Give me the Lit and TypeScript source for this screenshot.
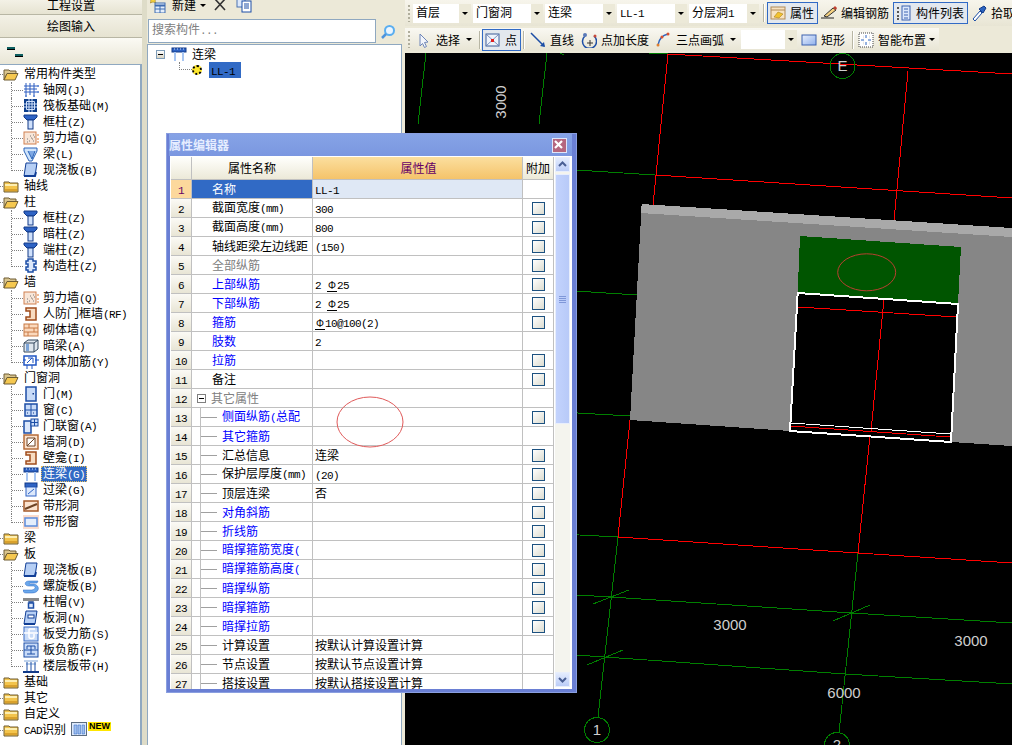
import { LitElement, html, css, svg } from "lit";
import { customElement } from "lit/decorators.js";

const shared = css`
  :host {
    font-family: "Noto Sans CJK SC", sans-serif;
    font-size: 12px;
    line-height: 16px;
    color: #000;
  }
  .la {
    font-family: "Liberation Mono", monospace;
    font-size: 11px;
    letter-spacing: -0.6px;
  }
  svg {
    display: block;
    flex: none;
  }
`;

// latin runs are half width in the reference, so they get their own size
const txt = (s: string) =>
  s
    .split(/([\x00-\x7f]+)/)
    .filter(Boolean)
    .map((p) =>
      /^[\x00-\x7f]/.test(p) ? html`<span class="la">${p}</span>` : p
    );

const icons: Record<string, any> = {
  folderOpen: svg`<path d="M1 4h5l1 1h6v3H4l-3 6z" fill="#d8c48e" stroke="#6e5d34"/><path d="M4 7.500h11l-3 6.500H1z" fill="#f5c850" stroke="#6e5d34"/>`,
  folder: svg`<path d="M1 4h5l1 1h8v9H1z" fill="#f3c44c" stroke="#6e5d34"/><path d="M2 6h12v2H2z" fill="#fdeeb0"/><path d="M2 11h12v2H2z" fill="#d9a12c"/>`,
  grid: svg`<path d="M1 4h13M1 7h13M1 10h13M3 1v12M7 1v12M11 1v12" stroke="#2c5cc0" fill="none"/><path d="M14 3h2v2h-2zM14 9h2v2h-2zM2 13h2v2H2zM10 13h2v2h-2z" fill="#6f93d8"/>`,
  raft: svg`<rect x="1" y="1" width="13" height="13" fill="#0e3f8c"/><path d="M3.500 3.500h8v8h-8zM1 6h13M1 9h13M6 1v13M9 1v13" stroke="#cfe0fb" fill="none"/>`,
  col: svg`<path d="M1 1h13v2l-3 3H4L1 3z" fill="#2e63c4" stroke="#123a88"/><rect x="5" y="6" width="5" height="9" fill="#cfe0fb" stroke="#123a88"/>`,
  wall: svg`<rect x="1" y="2" width="12" height="12" fill="#f8e6d8" stroke="#d08050"/><path d="M4 9h1M7 6h1M9 9h1M6 11h1M10 11h1M4 12h1M8 8h1M10 5h1M11 7h1" stroke="#777"/><path d="M14 5h2M14 9h2M14 12h2" stroke="#e07a30"/>`,
  beam: svg`<path d="M1 2h13v3L9 15H6L1 5z" fill="#cfe4fb" stroke="#2c64b8"/><path d="M5 5l4 8 3-8" fill="#7ea8e4" stroke="#2c64b8"/>`,
  slab: svg`<path d="M3 1h11l-2 13H1z" fill="#b6cff5" stroke="#123f96"/><path d="M1 14h11l1-4" fill="none" stroke="#123f96" stroke-width="2"/>`,
  gz: svg`<path d="M5 1h5v2h3v3h-2v3h2v3h-3v2H5v-2H3V9h2V6H3V3h2z" fill="#dce8fb" stroke="#1c4ea6" stroke-width="1.500"/>`,
  rf: svg`<path d="M3 2h10v12H3v-3h4V5H3z" fill="#f8dcc2" stroke="#a04c1c" stroke-width="1.500"/>`,
  brick: svg`<rect x="1" y="2" width="14" height="12" fill="#fbd9bd" stroke="#c87a46"/><path d="M1 6h14M1 10h14M6 2v4M11 6v4M5 10v4" stroke="#c87a46"/>`,
  anbeam: svg`<path d="M1 5l4-3h10v9l-4 3H1z" fill="#dfe6ee" stroke="#34495e"/><path d="M1 5h10v9M11 5l4-3" fill="none" stroke="#34495e"/><path d="M3 6h3v7H3z" fill="#7ca4d8"/>`,
  rebar: svg`<rect x="1" y="2" width="12" height="9" fill="#fff" stroke="#1f55c4" stroke-width="1.500"/><path d="M4 9l5-5M5 4h5v5M0 6h3M12 6h4M4 11v4M9 11v4" stroke="#1f55c4" fill="none"/>`,
  door: svg`<rect x="3" y="1" width="10" height="14" fill="#c8dbf8" stroke="#1c4ea6" stroke-width="1.500"/><rect x="9.500" y="7" width="1.500" height="1.500" fill="#123a88"/>`,
  win: svg`<rect x="2" y="2" width="12" height="12" fill="#c8dbf8" stroke="#1c4ea6" stroke-width="1.500"/><path d="M8 2v12M2 8h12" stroke="#1c4ea6"/><path d="M4 11h1M10 11h1" stroke="#123a88"/>`,
  doorwin: svg`<rect x="1" y="3" width="7" height="12" fill="#dce8fb" stroke="#1c4ea6" stroke-width="1.500"/><rect x="8" y="1" width="7" height="7" fill="#c8dbf8" stroke="#1c4ea6"/><path d="M11.500 1v7M8 4.500h7" stroke="#1c4ea6"/>`,
  hole: svg`<rect x="1" y="1" width="14" height="14" fill="#fbe3cf" stroke="#b66c3a" stroke-width="1.500"/><path d="M4 4h8v8H4z" fill="#fff" stroke="#6e4526"/><path d="M4 12l8-8" stroke="#6e4526"/>`,
  lian: svg`<rect x="1" y="2" width="14" height="4" fill="#2e63c4" stroke="#123a88"/><path d="M3 3h1M6 3h1M9 3h1M12 3h1" stroke="#cfe0fb"/><path d="M3 6h2v9H3zM11 6h2v9h-2z" fill="#a8c6f2"/>`,
  guo: svg`<rect x="2" y="1" width="12" height="4" fill="#2e63c4" stroke="#123a88"/><rect x="3" y="5" width="10" height="9" fill="#dce8fb" stroke="#2e63c4"/><path d="M5 12l6-5" stroke="#2e63c4"/>`,
  strip: svg`<rect x="1" y="3" width="14" height="10" fill="#fbe3cf" stroke="#a45a2a" stroke-width="1.500"/><path d="M2 11l12-5" stroke="#6e4526" stroke-width="2"/>`,
  stripw: svg`<rect x="0" y="1" width="16" height="14" fill="#fbdccc"/><rect x="2" y="4" width="12" height="8" fill="#e4eefc" stroke="#5c8cdc" stroke-width="1.500"/>`,
  spiral: svg`<path d="M15 3H6C1 3 1 8 6 8h4c3 0 3 3-1 4H0c0 2 1 3 3 3h6c7 0 9-7 2-9H7c-1 0-1-1 0-1h7z" fill="#6aa8ec" stroke="#2c64c0" stroke-width=".5"/>`,
  cap: svg`<rect x="0" y="4" width="16" height="3" fill="#8a8a8a"/><path d="M5 7h6l-1 2H6z" fill="#4f6fa8"/><rect x="5.500" y="9" width="5" height="5" fill="#dce8fb" stroke="#1c4ea6" stroke-width="1.500"/>`,
  slabhole: svg`<path d="M3 1h11l-2 13H1z" fill="#b6cff5" stroke="#123f96"/><rect x="5" y="5" width="6" height="3" fill="#fff" stroke="#123f96"/><path d="M1 14h11" stroke="#123f96" stroke-width="2"/>`,
  slabbar: svg`<rect x="1" y="1" width="14" height="14" fill="#c8dbf8" stroke="#3a6cc4"/><path d="M1 7h14M6 3h6M6 3v8c0 2 5 2 5 0V8" fill="none" stroke="#fff" stroke-width="1.500"/>`,
  slabneg: svg`<rect x="1" y="1" width="14" height="14" fill="#c8dbf8" stroke="#1c4ea6"/><path d="M4 4h8v3M4 4v3M1 8h14M4 12h8M8 4v8" fill="none" stroke="#1c4ea6"/>`,
  band: svg`<path d="M1 3h14M3 6h10" stroke="#7ca4d8"/><path d="M4 4v9M8 4v9M12 4v9" stroke="#1c4ea6"/><path d="M0 14h16" stroke="#123a88" stroke-width="2"/>`,
  cad: svg`<rect x=".500" y=".500" width="15" height="13" fill="#dde9fb" stroke="#5d6d80"/><path d="M3 3h3v9H3zM7 3h2.500v9H7zM11 3h2.500v9H11z" fill="#9ebfee" stroke="#2c64c0" stroke-width=".5"/>`,
  // toolbar glyphs
  add: svg`<path d="M3 0l1 2 2 0-1 2 1 2-3-1-3 1 1-2-1-2h2z" fill="#f6d23c" stroke="#8a6b10" stroke-width=".5"/><rect x="5" y="6" width="10" height="10" fill="#e4eefb" stroke="#3f6cb0"/><path d="M5 8.500h10" stroke="#3f6cb0" stroke-width="2"/><path d="M5 12h10M10 9v7" stroke="#3f6cb0"/>`,
  del: svg`<path d="M3 2l10 11M13 2L3 13" stroke="#333" stroke-width="1.600"/>`,
  copy: svg`<rect x="1" y="0" width="8" height="10" fill="#dce8fb" stroke="#4a72b0"/><rect x="6" y="4" width="9" height="11" fill="#fff" stroke="#1c4ea6"/><path d="M8 7h5M8 9h5M8 11h5" stroke="#1c4ea6"/>`,
  search: svg`<circle cx="9.500" cy="6.500" r="4.500" fill="#eaf5ff" stroke="#5aaef0" stroke-width="2"/><path d="M6 10l-4 4" stroke="#4d94dc" stroke-width="2.500"/>`,
  select: svg`<path d="M4 2l8 8-3.500.5 2 4-2 1-2-4L4 14z" fill="#f2f5fb" stroke="#6e86b8"/>`,
  point: svg`<rect x="1" y="2" width="13" height="12" fill="#eef3fb" stroke="#3c5c98"/><path d="M2 3l11 10M13 3L2 13" stroke="#7c93c0"/><rect x="6" y="7" width="3" height="3" fill="#e02020"/>`,
  line: svg`<path d="M1 1l13 13" stroke="#1c4ea6" stroke-width="1.500"/><path d="M15 15l-5-1 4-4z" fill="#1c4ea6"/>`,
  padd: svg`<path d="M4 4a7 7 0 1 0 9 0" fill="none" stroke="#1c4ea6" stroke-width="1.500"/><path d="M9 8v6M6 11h6" stroke="#333"/><circle cx="4" cy="3" r="2" fill="#5a7ab8"/><circle cx="14" cy="4" r="1.500" fill="#c84a3a"/>`,
  arc: svg`<path d="M2 13C3 7 7 3 12 2" fill="none" stroke="#2c64c0" stroke-width="1.500"/><circle cx="2" cy="13" r="1.500" fill="#e08030"/><circle cx="6" cy="5" r="1.500" fill="#d85030"/><circle cx="12" cy="2" r="1.500" fill="#d85030"/>`,
  rect: svg`<defs><linearGradient id="rg" x2="1" y2="1"><stop stop-color="#e8effc"/><stop offset="1" stop-color="#8fb0ec"/></linearGradient></defs><rect x="1" y="3" width="14" height="10" fill="url(#rg)" stroke="#3c62b0"/>`,
  smart: svg`<rect x="1" y="1" width="14" height="14" fill="#fff" stroke="#444" stroke-dasharray="1 1"/><path d="M5 5h.1M11 5h.1M5 11h.1M11 11h.1" stroke="#000" stroke-width="3"/><path d="M8 3v3M8 10v3M3 8h3M10 8h3" stroke="#2c64c0"/>`,
  attr: svg`<rect x="1" y="2" width="14" height="12" fill="#f7e2c0" stroke="#b08a58"/><path d="M1 5h14" stroke="#b08a58"/><path d="M4 12l4-5 5 2-4 4z" fill="#f2c230" stroke="#9a7410" stroke-width=".5"/>`,
  edit: svg`<path d="M0 13h13" stroke="#222"/><path d="M3 11l9-8 3 2-9 7z" fill="#f4d080" stroke="#333"/><path d="M12 3l3 2 1-2-2-2z" fill="#c04030"/>`,
  list: svg`<path d="M1 3h2M1 7h2M1 11h2M1 14h2" stroke="#555" stroke-width="2"/><rect x="6" y="1" width="8" height="14" fill="#dce8fb" stroke="#3c62b0"/><path d="M8 4h4M8 7h4M8 10h4M8 13h4" stroke="#3c62b0"/>`,
  pick: svg`<path d="M2 14l7-8 2 2-7 8z" fill="#fff" stroke="#1c4ea6"/><path d="M8 4l5-3 2 2-3 5z" fill="#2c64c0" stroke="#123a88"/>`,
};

const icon = (name: string, size = 16) =>
  html`<svg width=${size} height=${size} viewBox="0 0 16 16">${icons[name]}</svg>`;

type Leaf = { label: string; icon: string; selected?: boolean };
type Group = { label: string; open?: boolean; items?: Leaf[] };

const groups: Group[] = [
  {
    label: "常用构件类型",
    open: true,
    items: [
      { label: "轴网(J)", icon: "grid" },
      { label: "筏板基础(M)", icon: "raft" },
      { label: "框柱(Z)", icon: "col" },
      { label: "剪力墙(Q)", icon: "wall" },
      { label: "梁(L)", icon: "beam" },
      { label: "现浇板(B)", icon: "slab" },
    ],
  },
  { label: "轴线" },
  {
    label: "柱",
    open: true,
    items: [
      { label: "框柱(Z)", icon: "col" },
      { label: "暗柱(Z)", icon: "col" },
      { label: "端柱(Z)", icon: "col" },
      { label: "构造柱(Z)", icon: "gz" },
    ],
  },
  {
    label: "墙",
    open: true,
    items: [
      { label: "剪力墙(Q)", icon: "wall" },
      { label: "人防门框墙(RF)", icon: "rf" },
      { label: "砌体墙(Q)", icon: "brick" },
      { label: "暗梁(A)", icon: "anbeam" },
      { label: "砌体加筋(Y)", icon: "rebar" },
    ],
  },
  {
    label: "门窗洞",
    open: true,
    items: [
      { label: "门(M)", icon: "door" },
      { label: "窗(C)", icon: "win" },
      { label: "门联窗(A)", icon: "doorwin" },
      { label: "墙洞(D)", icon: "hole" },
      { label: "壁龛(I)", icon: "rf" },
      { label: "连梁(G)", icon: "lian", selected: true },
      { label: "过梁(G)", icon: "guo" },
      { label: "带形洞", icon: "strip" },
      { label: "带形窗", icon: "stripw" },
    ],
  },
  { label: "梁" },
  {
    label: "板",
    open: true,
    items: [
      { label: "现浇板(B)", icon: "slab" },
      { label: "螺旋板(B)", icon: "spiral" },
      { label: "柱帽(V)", icon: "cap" },
      { label: "板洞(N)", icon: "slabhole" },
      { label: "板受力筋(S)", icon: "slabbar" },
      { label: "板负筋(F)", icon: "slabneg" },
      { label: "楼层板带(H)", icon: "band" },
    ],
  },
  { label: "基础" },
  { label: "其它" },
  { label: "自定义" },
];

@customElement("left-nav")
class LeftNav extends LitElement {
  static styles = [
    shared,
    css`
      :host {
        display: flex;
        flex-direction: column;
        width: 142px;
        height: 745px;
        flex: none;
        overflow: hidden;
      }
      .tab {
        flex: none;
        display: flex;
        align-items: center;
        justify-content: center;
        background: linear-gradient(#f3f1e6, #e6e3d1);
        border-bottom: 1px solid #b8b6a4;
        box-sizing: border-box;
      }
      .tab.first {
        height: 15px;
        padding-bottom: 4px;
      }
      .tab.second {
        height: 23px;
      }
      .head {
        flex: none;
        height: 26px;
        box-sizing: border-box;
        padding: 9px 0 0 7px;
        background: linear-gradient(#fbfaf4, #e9e6d6);
      }
      .dash {
        display: block;
        width: 8px;
        height: 2px;
        background: #0d5f60;
        border-bottom: 1px solid #000;
      }
      .dash + .dash {
        margin: 4px 0 0 8px;
      }
      .tree {
        flex: 1;
        background: #fff;
        border-top: 1px solid #8fa8c0;
        border-right: 2px solid #8fa8c0;
        padding-top: 1px;
      }
      .row {
        display: flex;
        align-items: center;
        height: 16px;
        white-space: nowrap;
      }
      .lead {
        width: 3px;
        border-top: 1px dotted #808080;
      }
      .row.group .text {
        margin-left: 3px;
      }
      .row.leaf {
        padding-left: 11px;
      }
      .conn {
        width: 12px;
        height: 16px;
        box-sizing: border-box;
        border-left: 1px dotted #808080;
        position: relative;
      }
      .conn::after {
        content: "";
        position: absolute;
        left: 0;
        right: 0;
        top: 8px;
        border-top: 1px dotted #808080;
      }
      .conn.last {
        height: 9px;
        align-self: flex-start;
      }
      .text {
        margin-left: 2px;
        padding: 0 2px;
        height: 16px;
        line-height: 14px;
        box-sizing: border-box;
      }
      .text.sel {
        background: #316ac5;
        color: #fff;
        outline: 1px dotted #e8c060;
        outline-offset: -1px;
      }
      .new {
        margin: -7px 0 0 1px;
        background: #ffe600;
        font: bold 9px/9px "Liberation Sans", sans-serif;
        color: #000;
        padding: 0 1px;
      }
      .cad {
        margin-left: 3px;
      }
    `,
  ];

  render() {
    return html`
      <div class="tab first">工程设置</div>
      <div class="tab second">绘图输入</div>
      <div class="head"><i class="dash"></i><i class="dash"></i></div>
      <div class="tree">
        ${groups.map(
          (g) => html`
            <div class="row group">
              <span class="lead"></span>
              ${icon(g.open ? "folderOpen" : "folder")}
              <span class="text">${txt(g.label)}</span>
            </div>
            ${(g.items ?? []).map(
              (it, i) => html`
                <div class="row leaf">
                  <span class="conn ${i === g.items!.length - 1 ? "last" : ""}"></span>
                  ${icon(it.icon)}
                  <span class="text ${it.selected ? "sel" : ""}">${txt(it.label)}</span>
                </div>
              `
            )}
          `
        )}
        <div class="row group">
          <span class="lead"></span>
          ${icon("folder")}
          <span class="text">${txt("CAD识别")}</span>
          <span class="cad">${icon("cad")}</span>
          <span class="new">NEW</span>
        </div>
      </div>
    `;
  }
}

@customElement("component-panel")
class ComponentPanel extends LitElement {
  static styles = [
    shared,
    css`
      :host {
        display: flex;
        flex-direction: column;
        width: 258px;
        height: 745px;
        flex: none;
        box-sizing: border-box;
        padding-right: 3px;
        background: #ece9d8;
      }
      .bar {
        height: 19px;
        box-sizing: border-box;
        padding: 0 0 9px 3px;
        display: flex;
        align-items: center;
        flex: none;
      }
      .bar .name {
        margin-left: 6px;
      }
      .caret {
        width: 0;
        height: 0;
        margin: 1px 0 0 4px;
        border: 3px solid transparent;
        border-top: 3px solid #000;
        border-bottom: 0;
      }
      .del {
        margin-left: 6px;
      }
      .copy {
        margin-left: 8px;
      }
      .search {
        flex: none;
        height: 25px;
        display: flex;
        padding-left: 1px;
      }
      .input {
        width: 228px;
        height: 24px;
        box-sizing: border-box;
        background: #fff;
        border: 1px solid #8fa8c0;
        padding: 1px 0 0 3px;
        color: #808080;
      }
      .go {
        margin: 5px 0 0 4px;
      }
      .tree {
        flex: 1;
        background: #fff;
        border: 1px solid #8fa8c0;
        border-bottom: 0;
        padding: 1px 0 0 8px;
      }
      .row {
        display: flex;
        align-items: center;
        height: 16px;
      }
      .box {
        width: 9px;
        height: 9px;
        box-sizing: border-box;
        border: 1px solid #7f9db9;
        background: linear-gradient(#fff, #d8d4c4);
        display: flex;
        align-items: center;
        justify-content: center;
        margin-right: 6px;
      }
      .box::after {
        content: "";
        width: 5px;
        height: 1px;
        background: #000;
      }
      .row .label {
        margin-left: 5px;
      }
      .conn {
        width: 13px;
        height: 8px;
        margin: -8px 0 0 23px;
        box-sizing: border-box;
        border-left: 1px dotted #808080;
        border-bottom: 1px dotted #808080;
      }
      .gear {
        width: 10px;
        height: 10px;
        box-sizing: border-box;
        background: #ffe830;
        border: 2px dotted #000;
        border-radius: 50%;
      }
      .picked {
        margin-left: 7px;
        width: 32px;
        height: 16px;
        background: #316ac5;
        padding-left: 2px;
        box-sizing: border-box;
      }
    `,
  ];

  render() {
    return html`
      <div class="bar">
        ${icon("add")}
        <span class="name">新建</span>
        <i class="caret"></i>
        <span class="del">${icon("del")}</span>
        <span class="copy">${icon("copy")}</span>
      </div>
      <div class="search">
        <div class="input">搜索构件${txt("...")}</div>
        <span class="go">${icon("search")}</span>
      </div>
      <div class="tree">
        <div class="row">
          <i class="box"></i>
          ${icon("lian")}
          <span class="label">连梁</span>
        </div>
        <div class="row">
          <i class="conn"></i>
          <i class="gear"></i>
          <span class="picked">${txt("LL-1")}</span>
        </div>
      </div>
    `;
  }
}

type Combo = { label: string; w: number };
type Tool = { icon: string; label: string; w: number; on?: boolean; caret?: "" | "tight" | "wide" };

const combos: Combo[] = [
  { label: "首层", w: 58 },
  { label: "门窗洞", w: 70 },
  { label: "连梁", w: 70 },
  { label: "LL-1", w: 70 },
  { label: "分层洞1", w: 70 },
];

const topTools: Tool[] = [
  { icon: "attr", label: "属性", w: 51, on: true },
  { icon: "edit", label: "编辑钢筋", w: 75 },
  { icon: "list", label: "构件列表", w: 75, on: true },
  { icon: "pick", label: "拾取", w: 50 },
];

@customElement("draw-toolbar")
class DrawToolbar extends LitElement {
  static styles = [
    shared,
    css`
      :host {
        display: block;
        height: 53px;
        flex: none;
        background: #ece9d8;
        overflow: hidden;
      }
      .row {
        display: flex;
        align-items: center;
        white-space: nowrap;
      }
      .one {
        height: 26px;
        padding-left: 3px;
        background: linear-gradient(#f7f5ec, #e8e5d4);
      }
      .two {
        height: 23px;
        width: 534px;
        box-sizing: border-box;
        margin-top: 2px;
        padding-left: 3px;
        background: linear-gradient(#f9f8f2, #e8e5d4);
      }
      .grip {
        width: 2px;
        height: 17px;
        margin-right: 3px;
        flex: none;
        background: repeating-linear-gradient(#b0ae9c 0 2px, transparent 2px 4px);
      }
      .combo {
        display: flex;
        height: 19px;
        margin-right: 2px;
        flex: none;
      }
      .combo .val {
        flex: 1;
        background: #fff;
        padding: 0 0 0 3px;
        overflow: hidden;
      }
      .drop {
        width: 12px;
        background: #ece9d8;
        display: flex;
        align-items: center;
        justify-content: center;
      }
      .drop::after,
      .caret {
        content: "";
        width: 0;
        height: 0;
        border: 3px solid transparent;
        border-top: 3px solid #000;
        border-bottom: 0;
      }
      .sep {
        width: 1px;
        height: 18px;
        flex: none;
        background: #b8b6a4;
        border-right: 1px solid #fff;
      }
      .tool {
        display: flex;
        align-items: center;
        gap: 4px;
        height: 22px;
        box-sizing: border-box;
        padding-left: 2px;
        flex: none;
        border: 1px solid transparent;
      }
      .tool.on {
        background: #e3e8ee;
        border: 1px solid #316ac5;
      }
      .caret.wide {
        margin-left: 2px;
      }
      .caret.tight {
        margin-left: -1px;
      }
      .sa {
        margin: 0 2px 0 2px;
      }
      .sb {
        margin: 0 1px 0 1px;
      }
      .sc {
        margin: 0 2px 0 2px;
      }
      .sd {
        margin: 0 1px 0 0;
      }
      .combo.small {
        margin: 0 1px 0 0;
      }
    `,
  ];

  tool(t: Tool) {
    return html`<div class="tool ${t.on ? "on" : ""}" style="width:${t.w}px">
      ${icon(t.icon)}
      <span>${t.label}</span>
      ${t.caret ? html`<i class="caret ${t.caret}"></i>` : ""}
    </div>`;
  }

  render() {
    return html`
      <div class="row one">
        <i class="grip"></i>
        ${combos.map(
          (c) => html`<div class="combo" style="width:${c.w}px">
            <div class="val">${txt(c.label)}</div>
            <i class="drop"></i>
          </div>`
        )}
        <i class="sep sa"></i>
        ${topTools.map((t) => this.tool(t))}
      </div>
      <div class="row two">
        <i class="grip"></i>
        ${this.tool({ icon: "select", label: "选择", w: 65, caret: "wide" })}
        <i class="sep sb"></i>
        ${this.tool({ icon: "point", label: "点", w: 39, on: true })}
        <i class="sep sc"></i>
        ${this.tool({ icon: "line", label: "直线", w: 51 })}
        ${this.tool({ icon: "padd", label: "点加长度", w: 75 })}
        ${this.tool({ icon: "arc", label: "三点画弧", w: 88, caret: "wide" })}
        <div class="combo small" style="width:56px">
          <div class="val"></div>
          <i class="drop"></i>
        </div>
        ${this.tool({ icon: "rect", label: "矩形", w: 54 })}
        <i class="sep sd"></i>
        ${this.tool({ icon: "smart", label: "智能布置", w: 84, caret: "tight" })}
      </div>
    `;
  }
}

const green = "#007f00";
const red = "#ff0000";

const lines: [string, string][] = [
  // green axes
  [green, "426,53 418,124"],
  [green, "547,53 539,124"],
  [green, "560,53 564,55"],
  [green, "649,53 668,54"],
  [green, "560,169 655,175"],
  [green, "560,290 637,295"],
  [green, "560,412 630,416"],
  [green, "560,534 618,537"],
  [green, "618,537 598,717"],
  [green, "858,553 839,733"],
  [green, "560,594 611,597 852,613 1012,623"],
  [green, "560,654 605,657 845,674 1012,684"],
  [green, "593,604 629,590"],
  [green, "833,621 870,605"],
  [green, "587,665 623,650"],
  // red axes outside the wall
  [red, "668,54 1012,74"],
  [red, "655,175 1012,198"],
  [red, "618,537 858,553 1012,563"],
  [red, "668,54 653,205"],
  [red, "630,420 618,537"],
  [red, "908,71 894,221"],
  [red, "884,299 858,553"],
];

@customElement("cad-canvas")
class CadCanvas extends LitElement {
  static styles = [
    shared,
    css`
      :host {
        display: block;
        flex: 1;
        background: #000;
        overflow: hidden;
      }
      text {
        fill: #cfcfcf;
        font-family: "Liberation Sans", sans-serif;
        font-size: 15px;
        text-anchor: middle;
      }
    `,
  ];

  render() {
    return html`
      <svg width="607" height="692" viewBox="405 53 607 692">
        <g shape-rendering="crispEdges" fill="none">
          ${lines.map(([c, p]) => svg`<polyline points=${p} stroke=${c} />`)}
          <polygon points="641.700,204 1012,228 1012,446 951,442 958,303 797.700,292 790,431 630,420" fill="#868686" />
          <polygon points="641.700,204 1012,228 1012,237 640.700,213" fill="#a9a9a9" />
          <polygon points="800,236 961,247 958,303 797.700,292" fill="#005500" />
          <polygon points="797.700,292 958,303 951,442 790,431" fill="#000" />
          <polyline points="798,307 957,317" stroke=${red} />
          <polyline points="884,299 871,431" stroke=${red} />
          <polyline points="790,426 950,437" stroke=${red} />
          <polyline points="791,423 950,434" stroke="#fff" />
          <polygon points="797.700,293 958,304 951,442 790,431" stroke="#fff" stroke-width="2" />
          <circle cx="842.500" cy="66" r="12.500" stroke=${green} />
          <circle cx="597" cy="730" r="12.500" stroke=${green} />
          <circle cx="837" cy="745" r="12.500" stroke=${green} />
        </g>
        <ellipse cx="866.700" cy="272.300" rx="29" ry="18.500" fill="none" stroke="#b84030" />
        <text x="730" y="630">3000</text>
        <text x="971" y="646">3000</text>
        <text x="844" y="698">6000</text>
        <text transform="translate(506 102) rotate(-90)">3000</text>
        <text x="842.500" y="71">E</text>
        <text x="597" y="735">1</text>
        <text x="837" y="750">2</text>
      </svg>
    `;
  }
}

type Prop = {
  name: string;
  val?: string;
  tone?: "blue" | "grey";
  check?: boolean;
  sub?: boolean;
  head?: boolean;
};

const props: Prop[] = [
  { name: "名称", val: "LL-1" },
  { name: "截面宽度(mm)", val: "300", check: true },
  { name: "截面高度(mm)", val: "800", check: true },
  { name: "轴线距梁左边线距", val: "(150)", check: true },
  { name: "全部纵筋", tone: "grey", check: true },
  { name: "上部纵筋", tone: "blue", val: "2 #25", check: true },
  { name: "下部纵筋", tone: "blue", val: "2 #25", check: true },
  { name: "箍筋", tone: "blue", val: "#10@100(2)", check: true },
  { name: "肢数", tone: "blue", val: "2" },
  { name: "拉筋", tone: "blue", check: true },
  { name: "备注", check: true },
  { name: "其它属性", tone: "grey", head: true },
  { name: "侧面纵筋(总配", tone: "blue", sub: true, check: true },
  { name: "其它箍筋", tone: "blue", sub: true },
  { name: "汇总信息", sub: true, val: "连梁", check: true },
  { name: "保护层厚度(mm)", sub: true, val: "(20)", check: true },
  { name: "顶层连梁", sub: true, val: "否", check: true },
  { name: "对角斜筋", tone: "blue", sub: true, check: true },
  { name: "折线筋", tone: "blue", sub: true, check: true },
  { name: "暗撑箍筋宽度(", tone: "blue", sub: true, check: true },
  { name: "暗撑箍筋高度(", tone: "blue", sub: true, check: true },
  { name: "暗撑纵筋", tone: "blue", sub: true, check: true },
  { name: "暗撑箍筋", tone: "blue", sub: true, check: true },
  { name: "暗撑拉筋", tone: "blue", sub: true, check: true },
  { name: "计算设置", sub: true, val: "按默认计算设置计算" },
  { name: "节点设置", sub: true, val: "按默认节点设置计算" },
  { name: "搭接设置", sub: true, val: "按默认搭接设置计算" },
];

@customElement("prop-editor")
class PropEditor extends LitElement {
  static styles = [
    shared,
    css`
      :host {
        display: block;
        position: absolute;
        left: 166px;
        top: 133px;
        width: 411px;
        height: 560px;
        box-sizing: border-box;
        background: #6a7fd4;
        border: 1px solid #8a9fe0;
        padding: 0 4px 4px 3px;
        overflow: hidden;
      }
      .title {
        height: 22px;
        display: flex;
        align-items: center;
        justify-content: space-between;
        margin-left: -1px;
        padding: 0 5px 0 0;
        background: linear-gradient(#86a3e6, #7b97e0);
        color: #e6edff;
        font-weight: 700;
      }
      .close {
        width: 13px;
        height: 13px;
        background: #b5677f;
        border: 1px solid #dfe6fa;
        display: flex;
      }
      .body {
        display: flex;
        height: 532px;
        background: #fff;
        padding: 1px 0 0 1px;
        overflow: hidden;
      }
      .table {
        width: 383px;
        flex: none;
        overflow: hidden;
      }
      .grid {
        display: grid;
        grid-template-columns: 21px 121px 210px 31px;
      }
      .grid.header {
        height: 23px;
      }
      .cell {
        height: 19px;
        box-sizing: border-box;
        border-right: 1px solid #c0c0c0;
        border-bottom: 1px solid #c0c0c0;
        white-space: nowrap;
        overflow: hidden;
        line-height: 18px;
      }
      .header .cell {
        height: 23px;
        line-height: 22px;
        text-align: center;
        background: linear-gradient(#fffffc, #ece9d8);
      }
      .header .cell.value {
        color: #660066;
        background: linear-gradient(#fbdf9f, #f5c36a);
      }
      .num {
        text-align: center;
        background: linear-gradient(#fbfaf5, #e8e5d5);
      }
      .num.sel {
        color: #660066;
        background: #fcd89c;
      }
      .name {
        padding-left: 20px;
        display: flex;
        align-items: center;
      }
      .name.sel {
        background: #316ac5;
        color: #fff;
      }
      .name.blue {
        color: #0000ff;
      }
      .name.grey {
        color: #808080;
      }
      .name.sub {
        padding-left: 9px;
        background: linear-gradient(#c0c0c0, #c0c0c0) 8px 0 / 1px 100% no-repeat;
      }
      .name.sub::before {
        content: "";
        width: 16px;
        height: 1px;
        margin: 0 5px 0 0;
        background: #a0a0a0;
        flex: none;
      }
      .name.head {
        padding-left: 5px;
      }
      .exp {
        width: 9px;
        height: 9px;
        box-sizing: border-box;
        border: 1px solid #808080;
        margin-right: 5px;
        display: flex;
        align-items: center;
        justify-content: center;
        flex: none;
      }
      .exp::after {
        content: "";
        width: 5px;
        height: 1px;
        background: #000;
      }
      .value {
        padding-left: 2px;
        white-space: pre;
      }
      .value.sel {
        background: #dfe8f5;
      }
      .rebar {
        display: inline-block;
        width: 10px;
        font: 10px/10px "Liberation Sans", sans-serif;
        text-align: center;
        border-bottom: 1px solid #000;
      }
      .extra {
        display: flex;
        align-items: center;
        justify-content: center;
      }
      .check {
        width: 13px;
        height: 13px;
        box-sizing: border-box;
        border: 1px solid #1c5180;
        background: linear-gradient(135deg, #fff, #dcdcd0);
      }
      .scroll {
        width: 15px;
        flex: none;
        margin-left: 1px;
        display: flex;
        flex-direction: column;
        background: #f4f4ee;
        height: 530px;
      }
      .btn {
        height: 15px;
        flex: none;
        background: linear-gradient(#e4ecfd, #bccdf8);
        border: 1px solid #e8eefc;
        box-sizing: border-box;
        display: flex;
      }
      .thumb {
        height: 250px;
        margin: 2px 0 auto;
        flex: none;
        background: linear-gradient(90deg, #c3d3fd, #b8caf8);
        border: 1px solid #e8eefc;
        box-sizing: border-box;
        display: flex;
        align-items: center;
        justify-content: center;
      }
      .thumb i {
        width: 7px;
        height: 7px;
        background: repeating-linear-gradient(#7f97d8 0 1px, transparent 1px 2px);
      }
      .mark {
        position: absolute;
        left: 168px;
        top: 261px;
        pointer-events: none;
      }
    `,
  ];

  value(p: Prop) {
    const v = p.val ?? "";
    // # stands for the rebar grade symbol
    return v.split("#").map((part, i) =>
      i ? html`<span class="rebar">Φ</span>${txt(part)}` : txt(part)
    );
  }

  render() {
    return html`
      <div class="title">
        <span>属性编辑器</span>
        <span class="close">
          <svg width="11" height="11" viewBox="0 0 11 11">
            <path d="M2 2l7 7M9 2l-7 7" stroke="#fff" stroke-width="2.200" />
          </svg>
        </span>
      </div>
      <div class="body">
        <div class="table">
          <div class="grid header">
            <div class="cell"></div>
            <div class="cell">属性名称</div>
            <div class="cell value">属性值</div>
            <div class="cell">附加</div>
          </div>
          <div class="grid">
            ${props.map((p, i) => {
              const sel = i === 0;
              return html`
                <div class="cell num ${sel ? "sel" : ""}">${txt(String(i + 1))}</div>
                <div
                  class="cell name ${p.tone ?? ""} ${p.sub ? "sub" : ""} ${p.head ? "head" : ""} ${sel ? "sel" : ""}"
                >
                  ${p.head ? html`<i class="exp"></i>` : ""}
                  <span>${txt(p.name)}</span>
                </div>
                <div class="cell value ${sel ? "sel" : ""}">${this.value(p)}</div>
                <div class="cell extra">${p.check ? html`<i class="check"></i>` : ""}</div>
              `;
            })}
          </div>
        </div>
        <div class="scroll">
          <div class="btn">
            <svg width="13" height="13" viewBox="0 0 13 13">
              <path d="M3 8l3.500-3.500L10 8" fill="none" stroke="#4a5f94" stroke-width="2" />
            </svg>
          </div>
          <div class="thumb"><i></i></div>
          <div class="btn">
            <svg width="13" height="13" viewBox="0 0 13 13">
              <path d="M3 5l3.500 3.500L10 5" fill="none" stroke="#4a5f94" stroke-width="2" />
            </svg>
          </div>
        </div>
      </div>
      <svg class="mark" width="70" height="54" viewBox="0 0 70 54">
        <ellipse cx="35" cy="27" rx="33" ry="25" fill="none" stroke="#e05a5a" />
      </svg>
    `;
  }
}

@customElement("app-root")
class AppRoot extends LitElement {
  static styles = css`
    :host {
      display: flex;
      position: relative;
      width: 1012px;
      height: 745px;
      overflow: hidden;
      background: #ece9d8;
    }
    .gutter {
      width: 5px;
      flex: none;
      background: #dedcc8;
    }
    .work {
      flex: 1;
      display: flex;
      flex-direction: column;
      min-width: 0;
    }
  `;

  render() {
    return html`
      <left-nav></left-nav>
      <div class="gutter"></div>
      <component-panel></component-panel>
      <div class="work">
        <draw-toolbar></draw-toolbar>
        <cad-canvas></cad-canvas>
      </div>
      <prop-editor></prop-editor>
    `;
  }
}
